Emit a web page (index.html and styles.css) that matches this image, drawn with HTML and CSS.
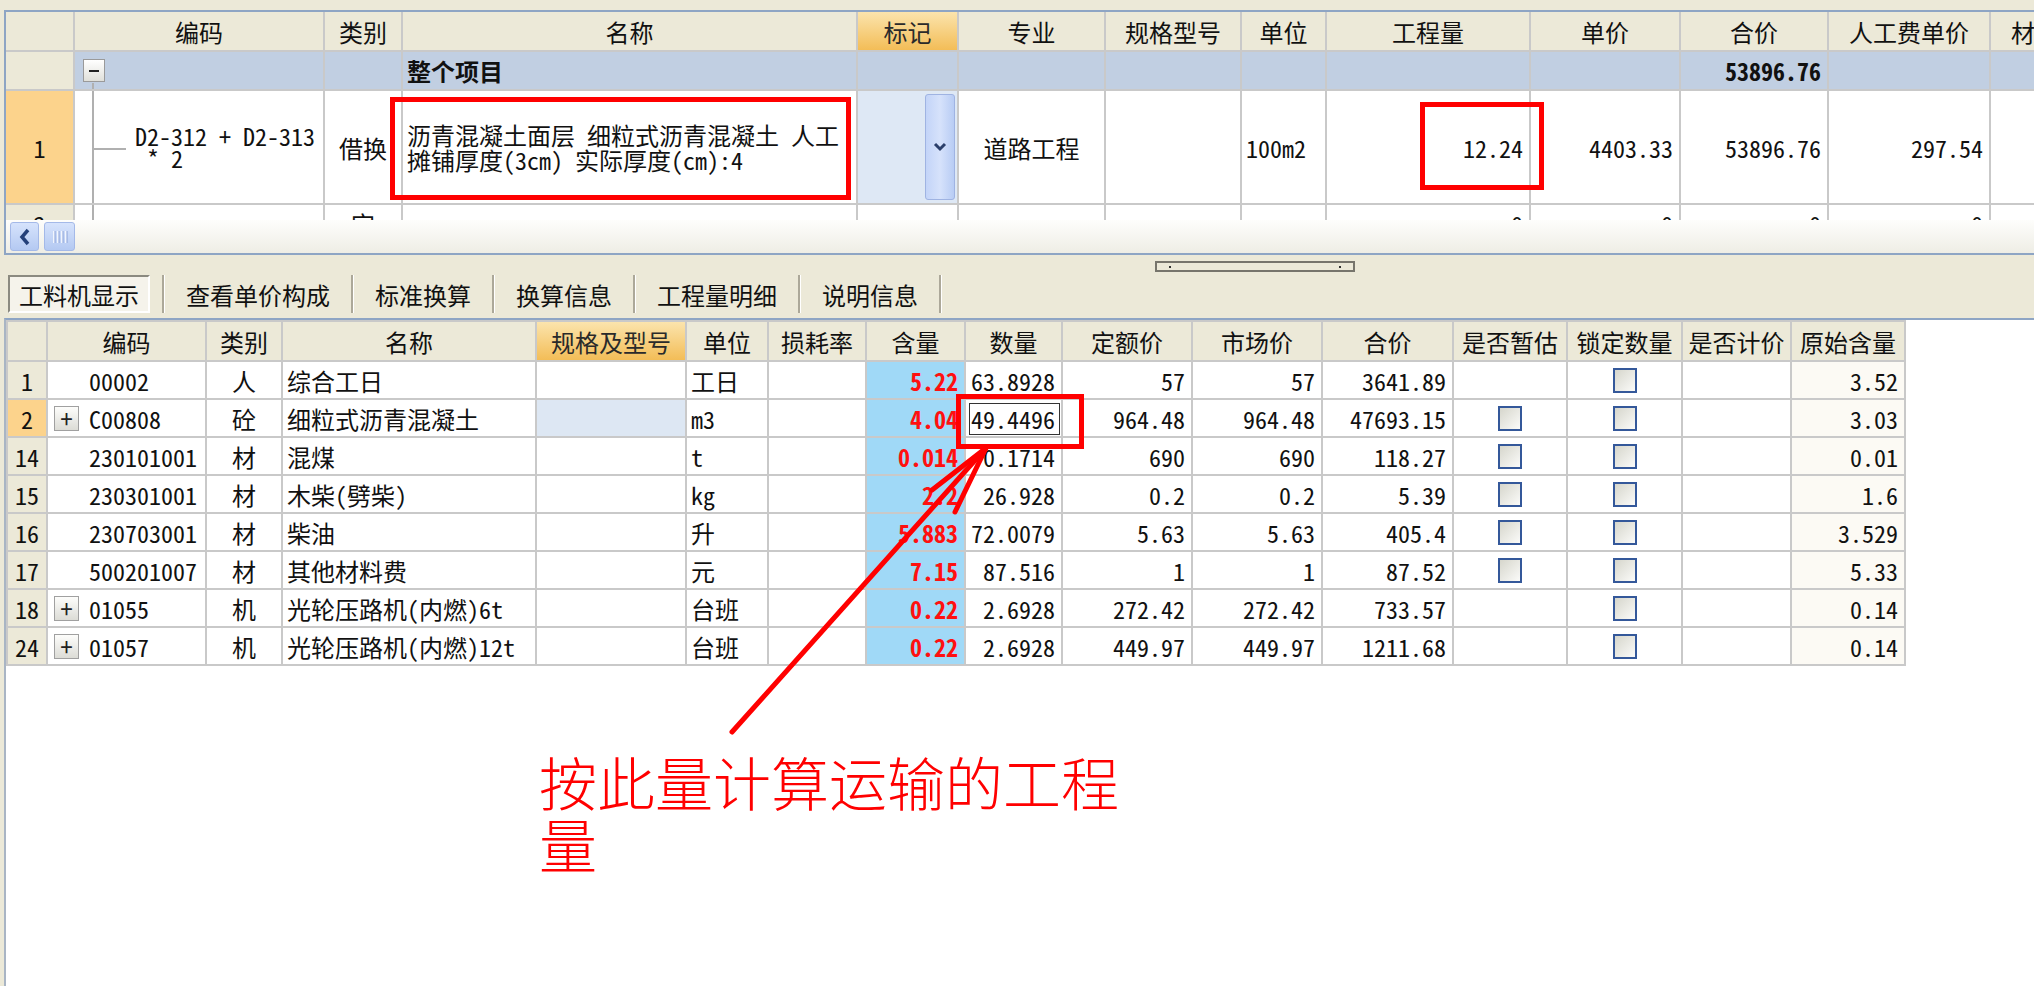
FILE: index.html
```html
<!DOCTYPE html>
<html lang="zh-CN">
<head>
<meta charset="utf-8">
<title>工料机显示</title>
<link rel="stylesheet" href="styles.css">
</head>
<body>
<div class="app">
  <div class="top-strip"></div>
  <div class="top-panel">
    <div class="grid-top">
      <div class="c h"></div>
      <div class="c h">编码</div>
      <div class="c h">类别</div>
      <div class="c h">名称</div>
      <div class="c h hl">标记</div>
      <div class="c h">专业</div>
      <div class="c h">规格型号</div>
      <div class="c h">单位</div>
      <div class="c h">工程量</div>
      <div class="c h">单价</div>
      <div class="c h">合价</div>
      <div class="c h">人工费单价</div>
      <div class="c h">材料费单价</div>

      <div class="c rn"></div>
      <div class="c g tree-top"><span class="minus"></span></div>
      <div class="c g"></div>
      <div class="c g b">整个项目</div>
      <div class="c g"></div>
      <div class="c g"></div>
      <div class="c g"></div>
      <div class="c g"></div>
      <div class="c g"></div>
      <div class="c g"></div>
      <div class="c g r b">53896.76</div>
      <div class="c g"></div>
      <div class="c g"></div>

      <div class="c rn sel">1</div>
      <div class="c code1 tree-mid"><span>D2-312 + D2-313</span><span class="ind">* 2</span></div>
      <div class="c ctr">借换</div>
      <div class="c name1">沥青混凝土面层 细粒式沥青混凝土 人工<br>摊铺厚度(3cm) 实际厚度(cm):4</div>
      <div class="c mark"><span class="dd"><svg width="16" height="12" viewBox="0 0 16 12"><path d="M3 3 L8 8 L13 3" fill="none" stroke="#2b3f6b" stroke-width="3"/></svg></span></div>
      <div class="c ctr">道路工程</div>
      <div class="c"></div>
      <div class="c">100m2</div>
      <div class="c r">12.24</div>
      <div class="c r">4403.33</div>
      <div class="c r">53896.76</div>
      <div class="c r">297.54</div>
      <div class="c"></div>

      <div class="c rn">2</div>
      <div class="c tree-end"></div>
      <div class="c ctr">定</div>
      <div class="c"></div>
      <div class="c"></div>
      <div class="c"></div>
      <div class="c"></div>
      <div class="c"></div>
      <div class="c r">0</div>
      <div class="c r">0</div>
      <div class="c r">0</div>
      <div class="c r">0</div>
      <div class="c"></div>
    </div>
    <div class="hscroll">
      <div class="sbtn"><svg width="20" height="22" viewBox="0 0 20 22"><path d="M13 4 L7 11 L13 18" fill="none" stroke="#24407a" stroke-width="3.5"/></svg></div>
      <div class="sbtn thumb"><svg width="16" height="14" viewBox="0 0 16 14"><path d="M2 1 V13 M6 1 V13 M10 1 V13 M14 1 V13" stroke="#ffffff" stroke-width="1.5"/><path d="M3 1 V13 M7 1 V13 M11 1 V13 M15 1 V13" stroke="#8aa2d8" stroke-width="1"/></svg></div>
    </div>
  </div>

  <div class="splitter">
    <div class="grip"><i></i><i></i></div>
    <div class="tabs">
      <div class="tab sel">工料机显示</div>
      <div class="sep first"></div>
      <div class="tab">查看单价构成</div>
      <div class="sep"></div>
      <div class="tab">标准换算</div>
      <div class="sep"></div>
      <div class="tab">换算信息</div>
      <div class="sep"></div>
      <div class="tab">工程量明细</div>
      <div class="sep"></div>
      <div class="tab">说明信息</div>
      <div class="sep"></div>
    </div>
  </div>

  <div class="bottom-panel">
    <div class="grid-bot">
      <div class="c h lb"></div>
      <div class="c h">编码</div>
      <div class="c h">类别</div>
      <div class="c h">名称</div>
      <div class="c h hl">规格及型号</div>
      <div class="c h">单位</div>
      <div class="c h">损耗率</div>
      <div class="c h">含量</div>
      <div class="c h">数量</div>
      <div class="c h">定额价</div>
      <div class="c h">市场价</div>
      <div class="c h">合价</div>
      <div class="c h">是否暂估</div>
      <div class="c h">锁定数量</div>
      <div class="c h">是否计价</div>
      <div class="c h">原始含量</div>

      <div class="c rn lb">1</div>
      <div class="c code"><span class="nop"></span>00002</div>
      <div class="c ctr">人</div>
      <div class="c">综合工日</div>
      <div class="c"></div>
      <div class="c">工日</div>
      <div class="c"></div>
      <div class="c q">5.22</div>
      <div class="c r">63.8928</div>
      <div class="c r">57</div>
      <div class="c r">57</div>
      <div class="c r">3641.89</div>
      <div class="c"></div>
      <div class="c ctr"><span class="cb"></span></div>
      <div class="c"></div>
      <div class="c r orig">3.52</div>

      <div class="c rn sel lb">2</div>
      <div class="c code"><span class="plus">+</span>C00808</div>
      <div class="c ctr">砼</div>
      <div class="c">细粒式沥青混凝土</div>
      <div class="c spec2"></div>
      <div class="c">m3</div>
      <div class="c"></div>
      <div class="c q">4.04</div>
      <div class="c r focus">49.4496</div>
      <div class="c r">964.48</div>
      <div class="c r">964.48</div>
      <div class="c r">47693.15</div>
      <div class="c ctr"><span class="cb"></span></div>
      <div class="c ctr"><span class="cb"></span></div>
      <div class="c"></div>
      <div class="c r orig">3.03</div>

      <div class="c rn lb">14</div>
      <div class="c code"><span class="nop"></span>230101001</div>
      <div class="c ctr">材</div>
      <div class="c">混煤</div>
      <div class="c"></div>
      <div class="c">t</div>
      <div class="c"></div>
      <div class="c q">0.014</div>
      <div class="c r">0.1714</div>
      <div class="c r">690</div>
      <div class="c r">690</div>
      <div class="c r">118.27</div>
      <div class="c ctr"><span class="cb"></span></div>
      <div class="c ctr"><span class="cb"></span></div>
      <div class="c"></div>
      <div class="c r orig">0.01</div>

      <div class="c rn lb">15</div>
      <div class="c code"><span class="nop"></span>230301001</div>
      <div class="c ctr">材</div>
      <div class="c">木柴(劈柴)</div>
      <div class="c"></div>
      <div class="c">kg</div>
      <div class="c"></div>
      <div class="c q">2.2</div>
      <div class="c r">26.928</div>
      <div class="c r">0.2</div>
      <div class="c r">0.2</div>
      <div class="c r">5.39</div>
      <div class="c ctr"><span class="cb"></span></div>
      <div class="c ctr"><span class="cb"></span></div>
      <div class="c"></div>
      <div class="c r orig">1.6</div>

      <div class="c rn lb">16</div>
      <div class="c code"><span class="nop"></span>230703001</div>
      <div class="c ctr">材</div>
      <div class="c">柴油</div>
      <div class="c"></div>
      <div class="c">升</div>
      <div class="c"></div>
      <div class="c q">5.883</div>
      <div class="c r">72.0079</div>
      <div class="c r">5.63</div>
      <div class="c r">5.63</div>
      <div class="c r">405.4</div>
      <div class="c ctr"><span class="cb"></span></div>
      <div class="c ctr"><span class="cb"></span></div>
      <div class="c"></div>
      <div class="c r orig">3.529</div>

      <div class="c rn lb">17</div>
      <div class="c code"><span class="nop"></span>500201007</div>
      <div class="c ctr">材</div>
      <div class="c">其他材料费</div>
      <div class="c"></div>
      <div class="c">元</div>
      <div class="c"></div>
      <div class="c q">7.15</div>
      <div class="c r">87.516</div>
      <div class="c r">1</div>
      <div class="c r">1</div>
      <div class="c r">87.52</div>
      <div class="c ctr"><span class="cb"></span></div>
      <div class="c ctr"><span class="cb"></span></div>
      <div class="c"></div>
      <div class="c r orig">5.33</div>

      <div class="c rn lb">18</div>
      <div class="c code"><span class="plus">+</span>01055</div>
      <div class="c ctr">机</div>
      <div class="c">光轮压路机(内燃)6t</div>
      <div class="c"></div>
      <div class="c">台班</div>
      <div class="c"></div>
      <div class="c q">0.22</div>
      <div class="c r">2.6928</div>
      <div class="c r">272.42</div>
      <div class="c r">272.42</div>
      <div class="c r">733.57</div>
      <div class="c"></div>
      <div class="c ctr"><span class="cb"></span></div>
      <div class="c"></div>
      <div class="c r orig">0.14</div>

      <div class="c rn lb">24</div>
      <div class="c code"><span class="plus">+</span>01057</div>
      <div class="c ctr">机</div>
      <div class="c">光轮压路机(内燃)12t</div>
      <div class="c"></div>
      <div class="c">台班</div>
      <div class="c"></div>
      <div class="c q">0.22</div>
      <div class="c r">2.6928</div>
      <div class="c r">449.97</div>
      <div class="c r">449.97</div>
      <div class="c r">1211.68</div>
      <div class="c"></div>
      <div class="c ctr"><span class="cb"></span></div>
      <div class="c"></div>
      <div class="c r orig">0.14</div>
    </div>
  </div>

  <div class="annot">
    <div class="box b1"></div>
    <div class="box b2"></div>
    <div class="box b3"></div>
    <svg class="arrow" width="2034" height="986" viewBox="0 0 2034 986">
      <g stroke="#ff0000" stroke-width="5" stroke-linecap="round" fill="none">
        <path d="M732 732 L986 448"/>
        <path d="M986 448 L932 490"/>
        <path d="M986 448 L955 512"/>
      </g>
    </svg>
    <div class="note">按此量计算运输的工程量</div>
  </div>
</div>
</body>
</html>
```

FILE: styles.css
```css
* { box-sizing: border-box; }
html, body { margin: 0; padding: 0; }
body {
  width: 2034px;
  height: 986px;
  overflow: hidden;
  background: #ece9d8;
  font-family: "Noto Sans CJK SC", "Noto Sans", sans-serif;
  font-size: 24px;
  color: #111;
  font-feature-settings: "hwid" 1;
}
.app {
  position: relative;
  width: 2034px;
  height: 986px;
  display: flex;
  flex-direction: column;
}
.top-strip { height: 10px; flex: none; }
.top-panel {
  flex: none;
  margin-left: 4px;
  border: 2px solid #8ea5c4;
  border-right: 0;
  background: #fff;
}
.grid-top {
  display: grid;
  grid-template-columns: 69px 250px 78px 455px 101px 147px 136px 85px 204px 150px 148px 162px 162px;
  grid-template-rows: 40px 39px 114px 38px;
  height: 208px;
  overflow: hidden;
}
.c {
  display: flex;
  align-items: center;
  padding: 0 4px;
  border-right: 2px solid #c9c9c9;
  border-bottom: 2px solid #c9c9c9;
  background: #fff;
  white-space: nowrap;
  line-height: 25px;
  overflow: hidden;
  position: relative;
}
.h { background: #ece9d8; justify-content: center; }
.hl { background: linear-gradient(#fbe4ad, #f3bd57); color: #2a2a2a; }
.rn { background: #ece9d8; justify-content: center; padding: 0; }
.rn.sel { background: #fcd38c; }
.g { background: #c1cfe2; }
.r { justify-content: flex-end; padding-right: 6px; }
.ctr { justify-content: center; }
.b { font-weight: bold; }
.lb { border-left: 2px solid #c9c9c9; }

.minus {
  width: 22px;
  height: 23px;
  margin-left: 4px;
  border: 1px solid #9a9a9a;
  background: linear-gradient(#ffffff, #e0e0da);
  position: relative;
}
.minus::after {
  content: "";
  position: absolute;
  left: 5px;
  right: 5px;
  top: 10px;
  height: 2px;
  background: #222;
}
.tree-top::after {
  content: "";
  position: absolute;
  left: 17px;
  top: 31px;
  bottom: -2px;
  width: 2px;
  background: #b0b0b0;
}
.tree-mid::before, .tree-end::before {
  content: "";
  position: absolute;
  left: 17px;
  top: 0;
  bottom: 0;
  width: 2px;
  background: #b0b0b0;
}
.tree-mid::after {
  content: "";
  position: absolute;
  left: 17px;
  top: 57px;
  width: 34px;
  height: 2px;
  background: #b0b0b0;
}
.code1 {
  flex-direction: column;
  align-items: flex-start;
  justify-content: center;
  line-height: 22px;
  padding-left: 60px;
}
.code1 .ind { padding-left: 12px; }
.name1 { padding-left: 4px; line-height: 25px; }
.mark {
  background: #dee8f5;
  justify-content: flex-end;
  padding: 3px 2px 3px 0;
  align-items: stretch;
}
.dd {
  width: 30px;
  border: 1px solid #9fb3e2;
  border-radius: 3px;
  background: linear-gradient(90deg, #c3d4f8, #d6e2fb 50%, #b8ccf4);
  display: flex;
  align-items: center;
  justify-content: center;
}

.hscroll {
  height: 33px;
  display: flex;
  align-items: center;
  gap: 5px;
  padding-left: 4px;
  background: linear-gradient(#fefefc, #eeede5);
}
.sbtn {
  width: 29px;
  height: 29px;
  border: 1px solid #a4b9e8;
  border-radius: 3px;
  background: linear-gradient(#d6e3fc, #b4c9f2);
  display: flex;
  align-items: center;
  justify-content: center;
}
.sbtn.thumb { width: 31px; }

.splitter {
  flex: none;
  height: 63px;
  display: flex;
  flex-direction: column;
}
.grip {
  margin: 6px 0 0 1155px;
  width: 200px;
  height: 11px;
  border: 2px solid #77756c;
  background: #ece9d8;
  display: flex;
  justify-content: space-between;
  align-items: center;
  padding: 0 12px;
}
.grip i { width: 2px; height: 2px; background: #333; }
.tabs {
  margin-top: 3px;
  height: 38px;
  display: flex;
  padding-left: 8px;
}
.tab {
  display: flex;
  align-items: center;
  padding: 0 21px;
  white-space: nowrap;
}
.tab.sel {
  width: 142px;
  padding: 0;
  justify-content: center;
  border: 2px solid;
  border-color: #8b8a80 #ffffff #ffffff #8b8a80;
  background: #f5f3eb;
}
.sep {
  width: 3px;
  border-left: 2px solid #aca899;
  border-right: 1px solid #ffffff;
}
.sep.first { margin-left: 12px; }

.bottom-panel {
  flex: 1;
  margin-left: 4px;
  border-top: 2px solid #8ea5c4;
  border-left: 2px solid #a9b5c4;
  background: #fff;
}
.grid-bot {
  display: grid;
  grid-template-columns: 42px 159px 76px 254px 150px 82px 98px 99px 97px 130px 130px 131px 114px 115px 109px 114px;
  grid-template-rows: 40px repeat(8, 38px);
  width: max-content;
  border-top: 2px solid #c9c9c9;
}
.code { padding-left: 6px; }
.plus, .nop {
  width: 25px;
  height: 25px;
  margin-right: 10px;
  flex: none;
}
.plus {
  border: 1px solid #a0a0a0;
  background: linear-gradient(#fdfdfb, #dcdcd6);
  display: flex;
  align-items: center;
  justify-content: center;
  font-size: 24px;
  line-height: 1;
  color: #222;
}
.q {
  background: #a0d9f7;
  color: #ff1010;
  font-weight: bold;
  justify-content: flex-end;
  padding-right: 6px;
}
.spec2 { background: #dde7f3; }
.orig { background: #fcfaf4; }
.focus { outline: 1px solid #333; outline-offset: -4px; }
.cb {
  width: 24px;
  height: 25px;
  border: 2px solid #34589a;
  background: linear-gradient(135deg, #d6d6cc, #fbfbf9);
}

.annot {
  position: absolute;
  left: 0;
  top: 0;
  width: 2034px;
  height: 986px;
  pointer-events: none;
}
.box { position: absolute; border: 5px solid #ff0000; }
.b1 { left: 390px; top: 97px; width: 461px; height: 103px; }
.b2 { left: 1420px; top: 102px; width: 124px; height: 88px; }
.b3 { left: 956px; top: 394px; width: 128px; height: 55px; }
.arrow { position: absolute; left: 0; top: 0; }
.note {
  position: absolute;
  left: 539px;
  top: 750px;
  width: 600px;
  font-size: 58px;
  line-height: 62px;
  font-weight: 300;
  color: #ff0000;
}
```
